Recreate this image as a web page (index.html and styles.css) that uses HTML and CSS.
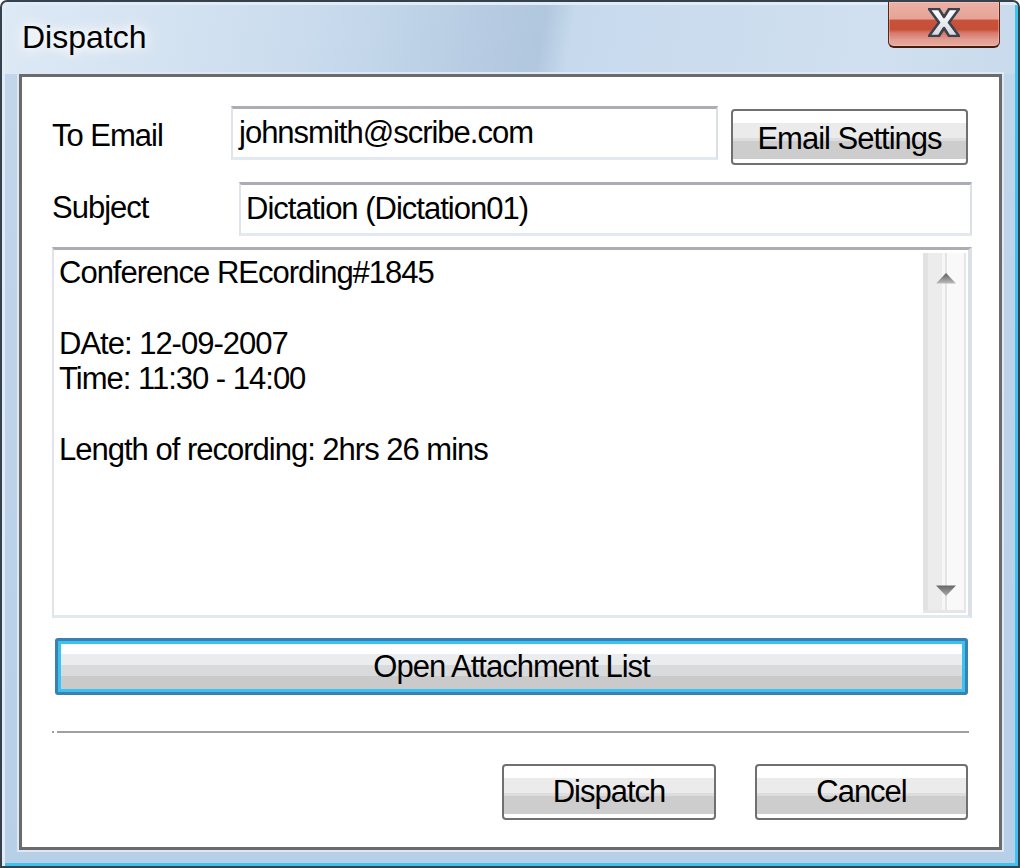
FILE: index.html
```html
<!DOCTYPE html>
<html>
<head>
<meta charset="utf-8">
<title>Dispatch</title>
<link rel="stylesheet" href="styles.css">
</head>
<body>
<div class="window">
  <div class="titlebar">
    <span class="title">Dispatch</span>
    <div class="close">
      <svg width="32" height="29" viewBox="-1 -1 32 29">
        <defs>
          <linearGradient id="xg" x1="0" y1="0" x2="0" y2="1">
            <stop offset="0" stop-color="#ffffff"/>
            <stop offset="1" stop-color="#d6d8dc"/>
          </linearGradient>
        </defs>
        <polygon points="0,0 10,0 15,8 20,0 30,0 20,13.5 30,27 20,27 15,19 10,27 0,27 10,13.5" fill="url(#xg)" stroke="#3a4250" stroke-width="2.6" stroke-linejoin="round"/>
      </svg>
    </div>
  </div>
  <div class="frame">
    <div class="client">
      <div class="row row-email">
        <span class="label label-email">To Email</span>
        <div class="field field-email">johnsmith@scribe.com</div>
        <div class="btn btn-settings">Email Settings</div>
      </div>
      <div class="row row-subject">
        <span class="label label-subject">Subject</span>
        <div class="field field-subject">Dictation (Dictation01)</div>
      </div>
      <div class="memo">
        <div class="memo-text">Conference REcording#1845

DAte: 12-09-2007
Time: 11:30 - 14:00

Length of recording: 2hrs 26 mins</div>
        <div class="scrollbar">
          <svg class="arrow" width="22" height="12" viewBox="0 0 22 12">
            <defs>
              <linearGradient id="ua" x1="0" y1="0" x2="0" y2="1">
                <stop offset="0" stop-color="#5c5c5c"/>
                <stop offset="1" stop-color="#bcbcbc"/>
              </linearGradient>
            </defs>
            <polygon points="1,11.5 11,1 21,11.5" fill="url(#ua)"/>
          </svg>
          <svg class="arrow" width="22" height="12" viewBox="0 0 22 12">
            <defs>
              <linearGradient id="da" x1="0" y1="0" x2="0" y2="1">
                <stop offset="0" stop-color="#666666"/>
                <stop offset="1" stop-color="#adadad"/>
              </linearGradient>
            </defs>
            <polygon points="1,0.5 21,0.5 11,11" fill="url(#da)"/>
          </svg>
        </div>
      </div>
      <div class="btn btn-default">Open Attachment List</div>
      <div class="separator"></div>
      <div class="actions">
        <div class="btn btn-action btn-dispatch">Dispatch</div>
        <div class="btn btn-action btn-cancel">Cancel</div>
      </div>
    </div>
  </div>
</div>
</body>
</html>
```

FILE: styles.css
```css
* {
  box-sizing: border-box;
}

html,
body {
  margin: 0;
  padding: 0;
}

body {
  background: #ffffff;
  font-family: "Liberation Sans", Arial, sans-serif;
  color: #000000;
}

.window {
  width: 1020px;
  height: 868px;
  border: 2px solid #36414e;
  border-radius: 7px 7px 0 0;
  display: flex;
  flex-direction: column;
  overflow: hidden;
  background:
    linear-gradient(100deg, #dde9f5 0%, #d3e2f1 18%, #c6d9ec 34%, #b8cde3 46%, #b1c7de 53%, #c7daed 56%, #cbdcee 70%, #d0e0f0 86%, #c8daec 100%) 0 0 / 100% 72px no-repeat,
    linear-gradient(#c2d6eb, #b8cfe8);
  box-shadow: inset 3px 3px 0 #e2ecf7, inset -3px -3px 0 #3cc3f0;
}

.titlebar {
  height: 72px;
  flex: none;
  display: flex;
  align-items: flex-start;
  padding-left: 20px;
}

.title {
  margin-top: 15px;
  font-size: 32px;
  line-height: 40px;
  text-shadow: 0 0 8px #ffffff, 0 0 14px #ffffff, 0 0 22px rgba(255, 255, 255, 0.9);
}

.close {
  margin-left: auto;
  margin-right: 18px;
  width: 112px;
  height: 46px;
  border: 1px solid #5a2418;
  border-top: none;
  border-bottom: 2px solid #4a1a10;
  border-radius: 0 0 6px 6px;
  background: linear-gradient(#ebb1a5 0%, #e5a396 38%, #c9523a 42%, #c54e36 62%, #d8776a 70%, #e39d91 86%, #e8aa9e 100%);
  box-shadow: inset 0 0 0 1px rgba(255, 220, 210, 0.35);
  display: flex;
  align-items: center;
  justify-content: center;
  padding-bottom: 3px;
}

.frame {
  flex: 1;
  display: flex;
  padding: 0 16px 16px 17px;
}

.client {
  flex: 1;
  display: flex;
  flex-direction: column;
  background: #ffffff;
  border: 3px solid #6b6b6b;
  box-shadow: 0 0 0 2px #dde8f4;
  padding: 29px 27px 0 30px;
}

.row {
  display: flex;
  align-items: flex-start;
  flex: none;
}

.row-email {
  height: 59px;
}

.row-subject {
  margin-top: 17px;
}

.label {
  font-size: 31px;
  letter-spacing: -1px;
  line-height: 36px;
  white-space: nowrap;
}

.label-email {
  width: 179px;
  padding-top: 12px;
}

.label-subject {
  width: 187px;
  padding-top: 8px;
}

.field {
  height: 54px;
  border-style: solid;
  border-width: 3px 2px 3px 2px;
  border-color: #abadb3 #dbdfe6 #e3e9ef #e2e3ea;
  font-size: 31px;
  letter-spacing: -1px;
  line-height: 48px;
  white-space: nowrap;
  overflow: hidden;
}

.field-email {
  width: 487px;
  padding-left: 6px;
}

.field-subject {
  flex: 1;
  padding-left: 5px;
}

.btn {
  border: 2px solid #707070;
  border-radius: 4px;
  background: linear-gradient(#ffffff 0 12px, #ebebeb 12px 27px, #dddddd 27px 30px, #cdcdcd 30px 48px, #ffffff 48px);
  text-align: center;
  font-size: 31px;
  letter-spacing: -1px;
  white-space: nowrap;
  flex: none;
}

.btn-settings {
  width: 237px;
  height: 56px;
  margin-left: 13px;
  margin-top: 3px;
  padding-top: 3px;
  line-height: 49px;
}

.memo {
  flex: none;
  margin-top: 11px;
  height: 371px;
  border-style: solid;
  border-width: 3px 4px 3px 2px;
  border-color: #abadb3 #dbdfe6 #e3e9ef #e2e3ea;
  display: flex;
}

.memo-text {
  flex: 1;
  padding: 5px 0 0 5px;
  font-size: 31px;
  letter-spacing: -1px;
  line-height: 35.4px;
  white-space: pre-line;
}

.scrollbar {
  width: 43px;
  margin: 3px 2px 2px 0;
  border-bottom: 3px solid #e6e6e6;
  background: linear-gradient(to right, #e2e2e2 0 5px, #ececec 5px 19px, #f6f6f6 19px 22px, #e4e4e4 22px 24px, #f9f9f9 24px 41px, #e6e6e6 41px 43px);
  display: flex;
  flex-direction: column;
  justify-content: space-between;
  align-items: center;
  padding: 19px 0 13px 3px;
}

.arrow {
  display: block;
}

.btn-default {
  margin: 20px 4px 0 3px;
  height: 57px;
  border: 3px solid #3c7fb1;
  border-radius: 3px;
  box-shadow: inset 0 0 0 3px #38c3f3;
  background: linear-gradient(#ffffff 0 13px, #ebecee 13px 24px, #d8dadc 24px 35px, #cacaca 35px);
  line-height: 51px;
}

.separator {
  flex: none;
  margin: 36px 3px 0 0;
  height: 2px;
  background: linear-gradient(to right, #a0a0a0 0 2px, transparent 2px 5px, #a0a0a0 5px);
}

.actions {
  flex: none;
  margin-top: 31px;
  display: flex;
  justify-content: flex-end;
  gap: 39px;
  padding-right: 4px;
}

.btn-action {
  height: 56px;
  line-height: 52px;
}

.btn-dispatch {
  width: 214px;
}

.btn-cancel {
  width: 213px;
}
```
